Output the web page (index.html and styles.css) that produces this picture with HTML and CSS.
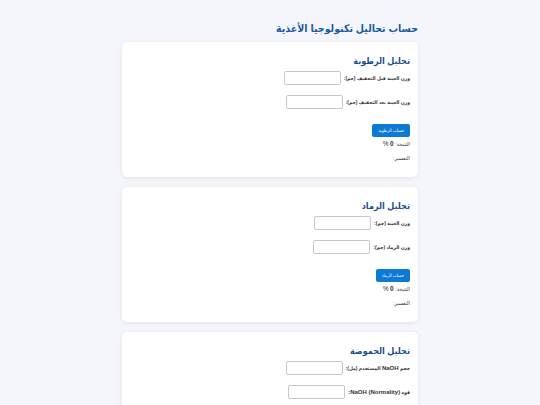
FILE: index.html
```html
<!DOCTYPE html>
<html lang="ar" dir="rtl">
<head>
<meta charset="utf-8">
<title>حساب تحاليل تكنولوجيا الأغذية</title>
<link rel="stylesheet" href="styles.css">
</head>
<body>
<div class="container">
  <h1 class="title">حساب تحاليل تكنولوجيا الأغذية</h1>

  <section class="card">
    <h2 class="card-title">تحليل الرطوبة</h2>
    <div class="row"><label class="lbl">وزن العينة قبل التجفيف (جم):</label><input class="field" type="number"></div>
    <div class="row"><label class="lbl">وزن العينة بعد التجفيف (جم):</label><input class="field" type="number"></div>
    <button class="btn">حساب الرطوبة</button>
    <p class="result">النتيجة: <b class="num">0</b> <span class="num">%</span></p>
    <p class="explain">التفسير: </p>
  </section>

  <section class="card">
    <h2 class="card-title">تحليل الرماد</h2>
    <div class="row"><label class="lbl">وزن العينة (جم):</label><input class="field" type="number"></div>
    <div class="row"><label class="lbl">وزن الرماد (جم):</label><input class="field" type="number"></div>
    <button class="btn">حساب الرماد</button>
    <p class="result">النتيجة: <b class="num">0</b> <span class="num">%</span></p>
    <p class="explain">التفسير: </p>
  </section>

  <section class="card">
    <h2 class="card-title">تحليل الحموضة</h2>
    <div class="row"><label class="lbl">حجم <span class="latin">NaOH</span> المستخدم (مل):</label><input class="field" type="number"></div>
    <div class="row"><label class="lbl">قوة <span class="latin">NaOH (Normality):</span></label><input class="field" type="number"></div>
    <button class="btn">حساب الحموضة</button>
    <p class="result">النتيجة: <b class="num">0</b> <span class="num">%</span></p>
    <p class="explain">التفسير: </p>
  </section>
</div>
</body>
</html>
```
FILE: styles.css
```css
html, body {
  margin: 0;
  padding: 0;
}
body {
  background: #f4f6fb;
  font-family: "Liberation Sans", "DejaVu Sans Condensed", "DejaVu Sans", sans-serif;
  font-stretch: condensed;
  color: #222;
}
.container {
  width: 296px;
  margin: 0 auto;
  padding-top: 19px;
}
.title {
  font-size: 10.5px;
  font-weight: bold;
  color: #1b5c9f;
  margin: 0 0 5px 0;
  line-height: 18px;
}
.card {
  background: #fff;
  border-radius: 5px;
  box-shadow: 0 1px 4px rgba(0, 0, 0, 0.08);
  padding: 12px 8px 15px 8px;
  margin-bottom: 10px;
}
.card-title {
  font-size: 9px;
  font-weight: bold;
  color: #1a4f8f;
  margin: 0 0 3px 0;
  line-height: 14px;
}
.row {
  display: flex;
  align-items: center;
  gap: 3px;
  margin-bottom: 10px;
  height: 14px;
}
.lbl {
  font-size: 5px;
  font-weight: bold;
  color: #333;
}
.latin {
  font-size: 6px;
}
.num {
  font-size: 6.5px;
}
.field {
  width: 57px;
  height: 14px;
  box-sizing: border-box;
  border: 1px solid #c8c8c8;
  border-radius: 2px;
  padding: 0;
  margin: 0;
  background: #fff;
}
.btn {
  display: block;
  margin-top: 15px;
  background: #0b7ad4;
  color: #fff;
  border: 0;
  border-radius: 2px;
  font-family: inherit;
  font-size: 4.5px;
  height: 13px;
  padding: 0 6px;
}
.result, .explain {
  font-size: 5.5px;
  color: #333;
  margin: 3px 0 0 0;
  line-height: 8px;
}
.explain {
  margin-top: 6px;
}
```
